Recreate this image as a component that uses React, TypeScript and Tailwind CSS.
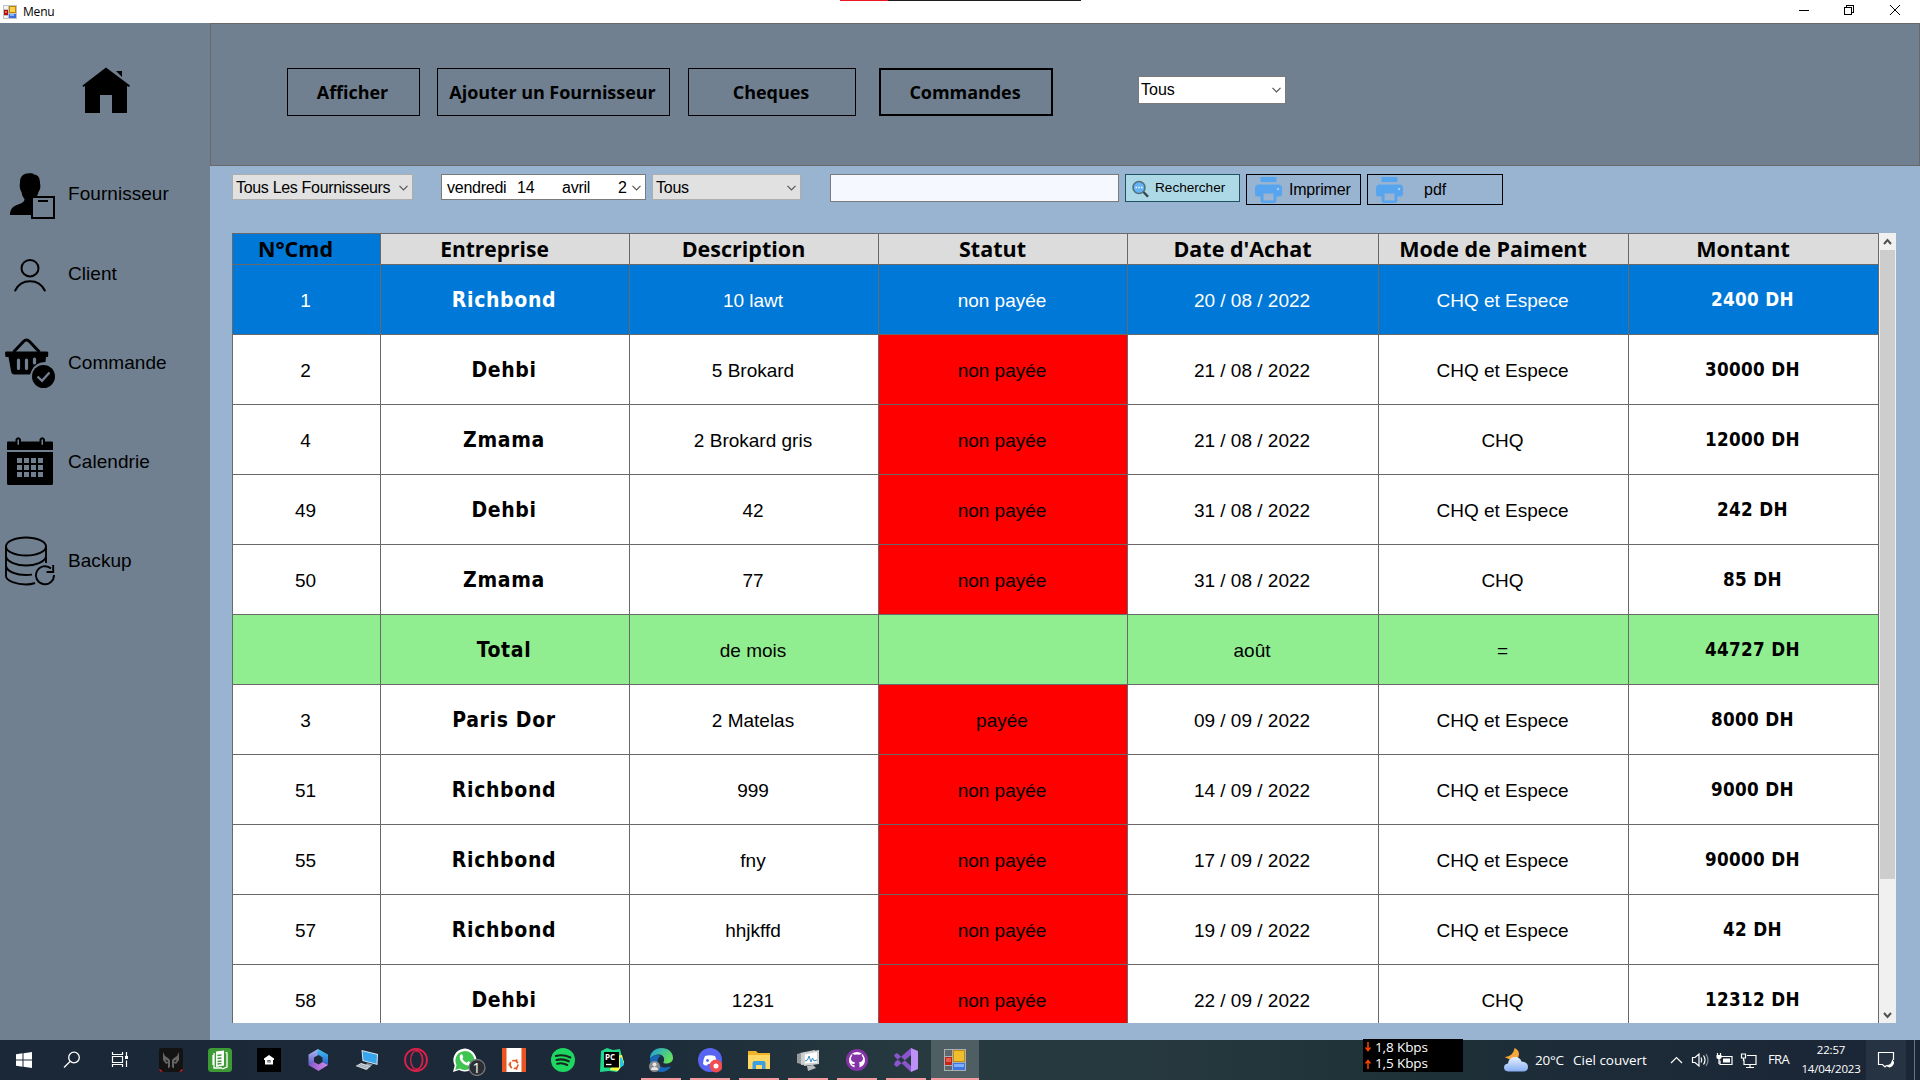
import React from "react";

const arial = "font-['Liberation_Sans',Arial,sans-serif]";
const segoe = "font-['Open_Sans','Segoe_UI',sans-serif]";
const tahoma = "font-['DejaVu_Sans_Condensed','DejaVu_Sans',Tahoma,sans-serif] [font-stretch:condensed]";

function FormIcon({ size }: { size: number }) {
  return (
    <svg width={size} height={size} viewBox="0 0 14 14" shapeRendering="crispEdges">
      <rect width="14" height="14" fill="#c3c3c3" />
      <path d="M1 1h4v3H1zM1 11h4v2H1z" fill="#f4f4f4" />
      <rect x="6" y="1" width="7" height="7" fill="#b8860b" />
      <rect x="7" y="2" width="5" height="5" fill="#fbd04a" />
      <rect x="1" y="5" width="4" height="5" fill="#a81410" />
      <rect x="2" y="6" width="2" height="2" fill="#f0685a" />
      <rect x="6" y="9" width="7" height="4" fill="#3a6fe0" />
      <rect x="7" y="9" width="4" height="2" fill="#8ab4ff" />
    </svg>
  );
}

function RunningFormIcon() {
  return (
    <svg width="22" height="22" viewBox="0 0 22 22" shapeRendering="crispEdges">
      <rect width="22" height="22" fill="#a9b0b3" />
      <path d="M1 1h7v6H1zM1 17h7v4H1z" fill="#5c686c" />
      <rect x="9" y="1" width="12" height="12" fill="#c08a10" />
      <rect x="10" y="2" width="10" height="10" fill="#f2bd2c" />
      <rect x="1" y="8" width="7" height="8" fill="#c0251c" />
      <rect x="2" y="9" width="5" height="4" fill="#ea5a4c" />
      <rect x="9" y="14" width="12" height="7" fill="#3f74e4" />
      <rect x="10" y="15" width="10" height="3" fill="#7faeff" />
    </svg>
  );
}

function TitleBar() {
  return (
    <header className="relative flex h-[23px] items-start bg-white">
      <div className="absolute left-[840px] top-0 flex h-px w-[241px] bg-[#1d1d1d]">
        <div className="h-px w-12 bg-[#f01428]" />
      </div>
      <div className="flex h-[23px] flex-1 items-center pl-[3px]">
        <FormIcon size={14} />
        <span className={`pl-[6px] text-[12px] tracking-[-0.2px] text-black ${segoe}`}>Menu</span>
      </div>
      <svg width="122" height="23" fill="none" stroke="#000" shapeRendering="crispEdges">
        <path d="M1 10.500h10" />
        <path d="M46.500 7.500h7v7h-7zM48.500 7V5.500h7v7H54" />
        <path d="M92 5l10 10M102 5l-10 10" shapeRendering="auto" />
      </svg>
    </header>
  );
}

const HomeIcon = () => (
  <svg width="48" height="46" viewBox="0 0 48 46">
    <path d="M24 0.500L0.500 18.500L1 20L3 19V46H18V28H30V46H45V19L47 20L48 18.500Z" />
    <path d="M34 4h6v6z" />
  </svg>
);
const SupplierIcon = () => (
  <svg width="45" height="46" viewBox="0 0 45 46">
    <path d="M10 9C10 3 14 0 20 0.300C24 0 23 1 24 1.500C29 2 30 6 30 10C31 14 30 17 28.500 19C28 22 26.500 23 26.500 24H21.500V42H0C0 36 3 33 8 31.500C12 30 14.500 29 14.500 26C12 23 12 21 11.500 19C9.500 16 9.500 13 10 9Z" />
    <path d="M22 24h22v21h-22z" fill="#708090" stroke="#000" strokeWidth="2" />
    <path d="M28 28h10" stroke="#000" strokeWidth="2" />
  </svg>
);
const ClientIcon = () => (
  <svg width="32" height="33" viewBox="0 0 32 33" fill="none" stroke="#000" strokeWidth="2" strokeLinecap="round">
    <ellipse cx="16" cy="9.200" rx="8.500" ry="8.200" />
    <path d="M1.200 31.500C7 19 25 19 30.800 31.500" />
  </svg>
);
const BasketIcon = () => (
  <svg width="50" height="50" viewBox="0 0 50 50">
    <path d="M8.500 14L18.500 3.500Q21.500 0.500 24.500 3.500L34.500 14" fill="none" stroke="#000" strokeWidth="3" />
    <path d="M1 13.500H42Q43.500 13.500 43.300 15L43 19H41L40.500 24Q31 24 27 32L25 36.500H9.500Q6.500 36.500 6 33L3.500 19H0.500L0 15Q0 13.500 1 13.500Z" />
    <path d="M13.500 22v8.500M21.500 22v8.500M29.500 21v4" stroke="#708090" strokeWidth="3.200" strokeLinecap="round" />
    <circle cx="38.500" cy="38.500" r="13" fill="#708090" />
    <circle cx="38.500" cy="38.500" r="11.500" />
    <path d="M32.500 38.500l4.500 4.300l7.500-8.300" fill="none" stroke="#708090" strokeWidth="2.400" />
  </svg>
);
const CalendarIcon = () => (
  <svg width="46" height="48" viewBox="0 0 46 48">
    <path d="M1 4.500H45Q46 4.500 46 5.500V13H0V5.500Q0 4.500 1 4.500ZM0 15H46V46.500Q46 48 44.500 48H1.500Q0 48 0 46.500Z" />
    <path d="M9.500 8V2.500Q11.200 0 13 2.500V8M33.500 8V2.500Q35.200 0 37 2.500V8" fill="#708090" stroke="#000" strokeWidth="2" />
    <path d="M9.500 8.500h3.500M33.500 8.500h3.500" stroke="#000" strokeWidth="1.500" />
    {[21, 28, 35].map((y) =>
      [10, 17, 24, 31].map((x) => <rect key={`${x}-${y}`} x={x} y={y} width="5" height="5" fill="#708090" />),
    )}
  </svg>
);
const BackupIcon = () => (
  <svg width="50" height="50" viewBox="0 0 50 50" fill="none" stroke="#000" strokeWidth="1.900">
    <ellipse cx="21" cy="10.500" rx="20" ry="9" />
    <path d="M1 10.500V40C1 45 12 48.500 21 48.500Q26 48.500 30 47M41 10.500V27M1 20.500C2 26 12 29.500 21 29.500S40 26 41 20.500M1 30C2 36 12 39 21 39Q24 39 27 38.600" />
    <path d="M46 32.500A9 9 0 1 0 49 39M48.200 29V36H41.500" />
  </svg>
);

function SideItem({ children, label, height, iconPad, labelTop }: {
  children: React.ReactNode; label: string; height: string; iconPad: string; labelTop: string;
}) {
  return (
    <div className={`flex items-start ${height}`}>
      <div className={`w-[68px] ${iconPad}`}>{children}</div>
      <span className={`text-[19px] leading-6 tracking-[0.05px] text-black ${labelTop} ${arial}`}>{label}</span>
    </div>
  );
}

function Sidebar() {
  return (
    <nav className="flex w-[210px] shrink-0 flex-col bg-[#708090]">
      <div className="h-[150px] pl-[82px] pt-[44px]"><HomeIcon /></div>
      <SideItem label="Fournisseur" height="h-[86px]" iconPad="pl-[10px]" labelTop="pt-[9px]"><SupplierIcon /></SideItem>
      <SideItem label="Client" height="h-[79px]" iconPad="pl-[14px]" labelTop="pt-[3px]"><ClientIcon /></SideItem>
      <SideItem label="Commande" height="h-[99px]" iconPad="pl-[5px]" labelTop="pt-[13px]"><BasketIcon /></SideItem>
      <SideItem label="Calendrie" height="h-[99px]" iconPad="pl-[7px]" labelTop="pt-[13px]"><CalendarIcon /></SideItem>
      <SideItem label="Backup" height="h-[99px]" iconPad="pl-[5px]" labelTop="pt-[13px]"><BackupIcon /></SideItem>
    </nav>
  );
}

const Chevron = () => (
  <svg width="9" height="6" viewBox="0 0 9 6" className="shrink-0" fill="none" stroke="#555" strokeWidth="1.200">
    <path d="M0.500 0.800l4 4l4-4" />
  </svg>
);

function TopPanel() {
  const btn = `flex h-12 items-center justify-center border-black pr-[2px] text-[18px] font-bold tracking-[-0.05px] text-black ${segoe}`;
  return (
    <div className="flex h-[143px] items-start border border-[#696969] bg-[#708090] pl-[76px] pt-[44px]">
      <button className={`${btn} w-[133px] border`}>Afficher</button>
      <button className={`${btn} ml-[17px] w-[233px] border`}>Ajouter un Fournisseur</button>
      <button className={`${btn} ml-[18px] w-[168px] border`}>Cheques</button>
      <button className={`${btn} ml-[23px] w-[174px] border-2`}>Commandes</button>
      <div className="ml-[85px] mt-2 flex h-7 w-[148px] items-center justify-between border border-[#7a7a7a] bg-white pl-[2px] pr-[4px]">
        <span className={`pb-px text-[16px] leading-5 text-black ${arial}`}>Tous</span>
        <Chevron />
      </div>
    </div>
  );
}

const PrinterIcon = () => (
  <svg width="27" height="26" viewBox="0 0 27 26" fill="#56a5ee">
    <rect x="5.500" y="0" width="16" height="5" rx="0.500" />
    <path d="M3 7.500H24Q27 8 27 11V17Q27 19.500 24 19.500H21.500V23Q21.500 26 18.500 26H8.500Q5.500 26 5.500 23V19.500H3Q0 19.500 0 17V11Q0 8 3 7.500Z" />
    <rect x="8.500" y="16.500" width="10" height="7" fill="#9ab4d2" />
    <circle cx="23" cy="12" r="1.200" fill="#a9cdf2" />
  </svg>
);

function Filters() {
  const combo = `flex h-[26px] items-center justify-between pt-px text-[16px] tracking-[-0.25px] text-black ${arial}`;
  return (
    <div className="flex h-[67px] items-start pl-[22px] pt-2">
      <div className={`${combo} w-[181px] border border-[#adadad] bg-[#e1e1e1] pl-[3px] pr-[4px]`}>
        <span className="whitespace-nowrap tracking-[-0.32px]">Tous Les Fournisseurs</span>
        <Chevron />
      </div>
      <div className={`${combo} ml-7 w-[205px] border border-[#7a7a7a] bg-white pl-[5px] pr-[4px]`}>
        <span className="w-[70px]">vendredi</span>
        <span className="w-[45px]">14</span>
        <span className="w-[56px]">avril</span>
        <span className="flex-1 overflow-hidden">2</span>
        <Chevron />
      </div>
      <div className={`${combo} ml-[6px] w-[149px] border border-[#adadad] bg-[#e1e1e1] pl-[3px] pr-[4px]`}>
        <span>Tous</span>
        <Chevron />
      </div>
      <div className="ml-[29px] h-7 w-[289px] border border-[#7a7a7a] bg-[#f5f8ff]" />
      <button className={`ml-[6px] flex h-7 w-[115px] items-center border border-[#1c5160] bg-[#add8e6] pl-[6px] pt-px text-[13.600px] text-black ${arial}`}>
        <svg width="17" height="18" viewBox="0 0 17 18">
          <circle cx="7" cy="7.500" r="6" fill="#64b5f6" stroke="#55707c" strokeWidth="1.600" />
          <path d="M11.500 12l4.500 4.800" stroke="#37474f" strokeWidth="2.400" />
          <path d="M3.500 7.500h1.500M6.300 7.500h1.500M9 7.500h1.500" stroke="#fff" strokeWidth="1.500" />
        </svg>
        <span className="pl-[6px]">Rechercher</span>
      </button>
      <button className={`ml-[6px] flex h-[31px] w-[115px] items-center border border-black pl-2 text-[16px] tracking-[-0.2px] text-black ${arial}`}>
        <PrinterIcon />
        <span className="pl-[7px]">Imprimer</span>
      </button>
      <button className={`ml-[6px] flex h-[31px] w-[136px] items-center border border-black pl-2 text-[16px] text-black ${arial}`}>
        <PrinterIcon />
        <span className="pl-[21px]">pdf</span>
      </button>
    </div>
  );
}

const cols = "grid grid-cols-[148px_249px_249px_249px_251px_250px_250px]";
const heads = ["N°Cmd", "Entreprise", "Description", "Statut", "Date d'Achat", "Mode de Paiment", "Montant"];
const rows = [
  ["1", "Richbond", "10 lawt", "non payée", "20 / 08 / 2022", "CHQ et Espece", "2400 DH"],
  ["2", "Dehbi", "5 Brokard", "non payée", "21 / 08 / 2022", "CHQ et Espece", "30000 DH"],
  ["4", "Zmama", "2 Brokard gris", "non payée", "21 / 08 / 2022", "CHQ", "12000 DH"],
  ["49", "Dehbi", "42", "non payée", "31 / 08 / 2022", "CHQ et Espece", "242 DH"],
  ["50", "Zmama", "77", "non payée", "31 / 08 / 2022", "CHQ", "85 DH"],
  ["", "Total", "de mois", "", "août", "=", "44727 DH"],
  ["3", "Paris Dor", "2 Matelas", "payée", "09 / 09 / 2022", "CHQ et Espece", "8000 DH"],
  ["51", "Richbond", "999", "non payée", "14 / 09 / 2022", "CHQ et Espece", "9000 DH"],
  ["55", "Richbond", "fny", "non payée", "17 / 09 / 2022", "CHQ et Espece", "90000 DH"],
  ["57", "Richbond", "hhjkffd", "non payée", "19 / 09 / 2022", "CHQ et Espece", "42 DH"],
  ["58", "Dehbi", "1231", "non payée", "22 / 09 / 2022", "CHQ", "12312 DH"],
];

function Row({ cells, index }: { cells: string[]; index: number }) {
  const selected = index === 0;
  const total = cells[1] === "Total";
  const tone = selected ? "bg-[#0078d7] text-white" : total ? "bg-[#90ee90] text-black" : "bg-white text-black";
  return (
    <div className={`${cols} h-[70px] ${tone}`}>
      {cells.map((c, i) => {
        const font =
          i === 1
            ? `pt-[2px] text-[21px] font-bold tracking-[0.65px] ${tahoma}`
            : i === 6
              ? `pt-[2px] text-[18.700px] font-bold tracking-[0.3px] ${tahoma}`
              : i === 2
                ? `pt-[3px] text-[19px] ${arial}`
                : `pt-[3px] text-[19px] ${arial}`;
        const red = i === 3 && !selected && !total ? "bg-[#ff0000]" : "";
        return (
          <div key={i} className={`flex items-center justify-center whitespace-nowrap border-b border-r border-[#696969] pr-[2px] ${font} ${red}`}>
            {c}
          </div>
        );
      })}
    </div>
  );
}

function OrdersTable() {
  return (
    <div className="ml-[22px] flex h-[790px] w-[1664px] overflow-hidden">
      <div className="w-[1647px] border-l border-t border-[#696969]">
        <div className={`${cols} h-[31px] grid-rows-[31px]`}>
          {heads.map((h, i) => (
            <div
              key={h}
              className={`flex items-center justify-center whitespace-nowrap border-b border-r border-[#696969] font-bold leading-[30px] text-black ${segoe} ${i === 1 ? "text-[21px]" : "text-[21.500px]"} ${i === 0 ? "bg-[#0078d7] pr-[22px]" : "bg-[#dcdcdc] pr-[21px]"}`}
            >
              {h}
            </div>
          ))}
        </div>
        {rows.map((r, i) => <Row key={i} cells={r} index={i} />)}
      </div>
      <div className="flex w-[17px] flex-col items-center bg-[#f0f0f0]">
        <svg width="17" height="17" viewBox="0 0 17 17" fill="none" stroke="#505050" strokeWidth="2"><path d="M5 11l3.500-4l3.500 4" /></svg>
        <div className="h-[629px] w-[15px] bg-[#cdcdcd]" />
        <svg width="17" height="17" viewBox="0 0 17 17" className="mt-auto" fill="none" stroke="#505050" strokeWidth="2"><path d="M5 7l3.500 4l3.500-4" /></svg>
      </div>
    </div>
  );
}

const S = ({ children }: { children: React.ReactNode }) => (
  <svg width="24" height="24" viewBox="0 0 24 24">{children}</svg>
);

const apps: { icon: React.ReactNode; open?: boolean; active?: boolean }[] = [
  { icon: <S><rect width="24" height="24" rx="2" fill="#131313" /><path d="M0 20.500l4 3H1zM24 20.500l-4 3H23z" fill="#e0202a" /><path d="M4 4l2 4l3 2l2 2v7l-2 1.500V15l-2 1l-3-4zM20 4l-2 4l-3 2l-2 2v7l2 1.500V15l2 1l3-4z" fill="#666" /><path d="M6.500 11.500l2.500 1.500v1l-2-.5zM17.500 11.500L15 13v1l2-.5z" fill="#161616" /></S> },
  { icon: <S><rect width="24" height="24" rx="3.500" fill="#3d9a35" /><path d="M8 3.500l8-1v15l-8 1.500z" fill="#fff" /><path d="M6 5v15l8 0M17.500 4.500l1.500 .5v14l-5 2M5 7v10" fill="none" stroke="#fff" strokeWidth="1.300" /><path d="M9.500 7.500l4-.5M9.500 10.500l4-.5M9.500 13.500l4-.5M9.500 16l4-.5" stroke="#3d9a35" strokeWidth="1.500" /></S> },
  { icon: <S><rect width="24" height="24" fill="#000" /><path d="M12 7l-5 3.500v1.500h1v4.500h8V12h1v-1.500z" fill="#fff" /><path d="M10.500 14.500v-2.500h3v2.500z" fill="#333" /><path d="M12 12.500v2" stroke="#fff" /></S> },
  { icon: <S><defs><linearGradient id="m1" x2="0" y2="1"><stop stopColor="#b3b9f2" /><stop offset="1" stopColor="#4c4bbd" /></linearGradient><linearGradient id="m2" x2="0" y2="1"><stop stopColor="#3fc4f4" /><stop offset="1" stopColor="#2f5fc8" /></linearGradient><linearGradient id="m3" x2="1"><stop stopColor="#8a55c8" /><stop offset="1" stopColor="#d18de8" /></linearGradient></defs><path d="M12 1L2.500 6.500V17l5.500 3V9.500l4.500-2.500z" fill="url(#m1)" /><path d="M12 1l10 5.500V17l-5.500-3V9.500L11 6z" fill="url(#m2)" /><path d="M2.500 17L8 14l4.500 2.500l4-2.500l5.500 3L12.500 23z" fill="url(#m3)" /></S> },
  { icon: <S><path d="M6.500 2l16.500 4l-.5 11l-15-4z" fill="#dbe6ef" /><path d="M7.500 3.200l14.500 3.500l-.5 9l-13-3.400z" fill="#37a6ee" /><path d="M12 15l6 1.500l-2 1.500l-5-1z" fill="#8b98a3" /><path d="M6 15l10 3l-4.500 4L0.500 18z" fill="#d6dce1" /><path d="M3 17.500l9 2.700M5 16.500l9 2.500" stroke="#8793a0" strokeWidth=".8" /></S> },
  { icon: <S><circle cx="12" cy="12" r="11" fill="none" stroke="#e0204a" strokeWidth="1.800" /><ellipse cx="12.500" cy="12" rx="5.800" ry="9.300" fill="none" stroke="#e0204a" strokeWidth="1.300" /><path d="M12 2.800q7 1 7 9.200t-7 9.200" fill="none" stroke="#e0204a" strokeWidth="1" /></S> },
  { icon: <svg width="34" height="28" viewBox="0 0 34 28" className="ml-[8px] mt-[3px]"><path d="M1 24L2.700 17.500A11.500 11.500 0 1 1 7 22z" fill="#fff" /><path d="M3.200 22l1.300-5A9.500 9.500 0 1 1 7.700 20.500z" fill="#3fc351" /><path d="M8.500 6.500q1.500-1 2.200 1l.6 1.800l-1 1.400q1.500 3 4.500 4l1.400-1.500l2.600 1.200q.8 1.500-2 3q-5 0-8.200-5q-1.800-3.500-.1-5.900z" fill="#fff" /><circle cx="25" cy="19.500" r="8" fill="#2b2f33" stroke="#75797d" strokeWidth="1.300" /><text x="24.500" y="24.500" textAnchor="middle" fontSize="14" fill="#fff" fontFamily="Open Sans">1</text></svg> },
  { icon: <S><rect width="24" height="24" fill="#fff" /><path d="M0 0h4.500v24H0zM19.500 0H24v24h-4.500z" fill="#e95420" /><circle cx="12" cy="16.500" r="4" fill="none" stroke="#e95420" strokeWidth="1.700" strokeDasharray="6.500 1.800" /><path d="M6.500 16.500h2M14 11.500l.8 1.500M14 21.500l.8-1.500" stroke="#e95420" strokeWidth="2.200" /></S> },
  { icon: <S><circle cx="12" cy="12" r="12" fill="#1ed760" /><path d="M4.800 8q7.500-2 14.500 1.500M5.500 12q6.500-1.700 12.300 1.300M6.200 15.700q5.300-1.200 10 1.300" fill="none" stroke="#14271c" strokeWidth="2.100" strokeLinecap="round" /></S> },
  { icon: <S><path d="M1 3l6-3l6 2l7-1l2 8l2 5l-7 10l-8-1l-9 1z" fill="#21d789" /><path d="M15 8l7-1l2 8l-6 8l-8-1z" fill="#fcf84a" /><path d="M20 9l2 1l2 7l-4 3z" fill="#25c7ea" /><rect x="4" y="4" width="15" height="15.500" fill="#000" /><text x="5" y="12" fontSize="8" fontWeight="bold" fill="#fff" fontFamily="Open Sans">PC</text><path d="M6 16.500h5.500" stroke="#fff" strokeWidth="1.300" /></S> },
  { open: true, icon: <S><defs><linearGradient id="e1" x2="1" y2=".5"><stop stopColor="#1b9de2" /><stop offset="1" stopColor="#63de5d" /></linearGradient></defs><path d="M1 11C1 4 6 0 12.500 0C19 0 24 4 24 10C24 14 20.500 15.500 17 15.500C14 15.500 14 14 15 13C16 9 13 6.500 10 6.500C5 6.500 2 9 1 11Z" fill="url(#e1)" /><path d="M1 11C3 7 9 6 12 8C9 9 8 12 9 15C11 20 17 20.500 22 18C20 22 16 24 12 24C5 24 .5 18 1 11Z" fill="#1766b8" /><circle cx="5.500" cy="18.500" r="5.500" fill="#8c8c8c" /><circle cx="5.500" cy="16.500" r="2" fill="#e8e8e8" /><path d="M2 22q0-3 3.500-3t3.500 3z" fill="#e8e8e8" /></S> },
  { open: true, icon: <svg width="24" height="26" viewBox="0 0 24 26"><circle cx="12" cy="13" r="12" fill="#5865f2" /><path d="M7 9q5-1.500 10 0q2 4 2 8q-2 2-4 1.500l-1-1.500h-4l-1 1.500q-2 .5-4-1.500q0-4 2-8z" fill="#fff" /><circle cx="9.500" cy="13.500" r="1.400" fill="#5865f2" /><circle cx="18" cy="19" r="6.500" fill="#f04d50" /><circle cx="18" cy="19" r="2.500" fill="#fff" /></svg> },
  { open: true, icon: <S><path d="M1 3h8l2 2h12v16H1z" fill="#f0b429" /><path d="M1 7h22v14H1z" fill="#ffd765" /><path d="M5.500 21v-6q0-2 2-2h9q2 0 2 2v6h-3.500v-4H9v4z" fill="#3c9fe0" /></S> },
  { open: true, icon: <S><path d="M4 5l15-3v14l-14 1z" fill="#c9cdcf" /><path d="M1 6l4-1v11l-4-1z" fill="#969b9d" /><path d="M7 5l16-3v14l-15 2z" fill="#cfd3d4" /><path d="M9 6.500l12-2.500v10.500l-12 1z" fill="#fff" /><path d="M9 13l2.500-1l1.500-4l2 6l1.500-4l1.500 3l3-1" fill="none" stroke="#388cc9" /><path d="M11 18l6-1l3 3l-8 3z" fill="#b9bcbd" /></S> },
  { open: true, icon: <S><circle cx="12" cy="12" r="11" fill="#8534a8" /><path d="M12 4a8 8 0 0 0-2.500 15.600V17q-2.500.3-3-1.500q1.500.8 3 .2q.2-1 .6-1.300c-4.500-.7-5-4.700-3-6.500l.1-2q1.500 0 2.500.9q2.300-.6 4.600 0q1-.9 2.500-.9l.1 2c2 1.800 1.500 5.800-3 6.500q.6.600.6 2v3.200A8 8 0 0 0 12 4z" fill="#fff" /></S> },
  { open: true, icon: <S><path d="M0 7l3-2l14 13v6L1 9zM0 17l3 2L17 7V0L1 14z" fill="#8a55cf" /><path d="M17 0l7 3v18l-7 3z" fill="#bd90f5" /></S> },
  { open: true, active: true, icon: <RunningFormIcon /> },
];

function Taskbar() {
  const tiny = `text-white ${segoe}`;
  return (
    <footer className="flex h-10 bg-[linear-gradient(90deg,#1b2838_0%,#1b2938_32%,#273a40_48%,#26383d_62%,#1e3237_72%,#1d2b38_82%,#1a2535_100%)]">
      <div className="flex w-[147px] items-center">
        <svg width="147" height="40" fill="none" stroke="#fff">
          <path d="M16 14.300l6.500-1v6.200H16zM23.500 13.200l8.500-1.200v7.500h-8.500zM16 20.500h6.500v6.200l-6.500-1zM23.500 20.500H32V28l-8.500-1.200z" fill="#fff" stroke="none" />
          <circle cx="74" cy="17.500" r="5.300" strokeWidth="1.300" />
          <path d="M70 21.500l-6 6" strokeWidth="1.300" />
          <path d="M112.500 12v2.500h10V12M112.500 27v-2.500h10V27M112.500 16.500h10v6h-10zM126.500 12v5M126.500 20.500V27" strokeWidth="1.200" />
          <path d="M125 16h3v3h-3z" fill="#fff" stroke="none" />
        </svg>
      </div>
      <div className="flex gap-px">
        {apps.map((a, i) => (
          <div key={i} className={`flex w-12 flex-col items-center ${a.active ? "bg-[#4f5e63]" : ""}`}>
            <div className="flex h-[38px] items-center pt-[2px]">{a.icon}</div>
            {a.open && <div className={`h-[2px] bg-[#f59ba0] ${a.active ? "w-12" : "w-10"}`} />}
          </div>
        ))}
      </div>
      <div className={`-mt-px ml-[384px] flex h-[33px] w-[100px] flex-col bg-black text-[13.500px] leading-[17px] tracking-[-0.1px] ${tiny}`}>
        {[["↓", "1,8 Kbps"], ["↑", "1,5 Kbps"]].map(([arrow, rate]) => (
          <div key={rate} className="flex h-[16.500px] items-center pl-[2px]">
            <svg width="6" height="10" viewBox="0 0 6 10" className={arrow === "↑" ? "rotate-180" : ""} fill="none" stroke="#ff4500" strokeWidth="1.500">
              <path d="M3 0v8M0.500 5.500L3 8.500l2.500-3" />
            </svg>
            <span className="pl-[4px]">{rate}</span>
          </div>
        ))}
      </div>
      <svg width="26" height="26" viewBox="0 0 26 26" className="ml-10 mt-[7px]">
        <defs><linearGradient id="cl" x2="0" y2="1"><stop stopColor="#e6efff" /><stop offset="1" stopColor="#86aef2" /></linearGradient></defs>
        <path d="M11.500 1C17 3 17 9 14 12L10 14L1.500 10C7 10 11 6 11.500 1Z" fill="#f5a83a" />
        <path d="M5 24.500Q1 24 1 20.500Q1 17 5 16.500Q6 10 12 10Q17 10 18.500 14.500Q25 15 25 20Q25 24 20.500 24.500Z" fill="url(#cl)" />
      </svg>
      <div className={`flex h-10 items-center text-[13.500px] ${tiny}`}>
        <span className="w-[38px] pl-[6px] tracking-[-0.2px]">20°C</span>
        <span className="w-[103px] whitespace-nowrap pl-[6px]">Ciel couvert</span>
      </div>
      <svg width="96" height="40" fill="none" stroke="#fff" strokeWidth="1.200">
        <path d="M1 23l5.500-5.500l5.500 5.500" />
        <path d="M22.500 17.500h2.500l4-3.500v12l-4-3.500h-2.500zM31 17.500q1.500 2.500 0 5M33.500 15.500q3 4.500 0 9" />
        <path d="M36 14q4 6 0 12" stroke="#8a939c" />
        <path d="M51 16.500h11v8H50v-4" />
        <path d="M53 18.500h7v4h-7zM46.500 15h5v3q-2.500 2.500-5 0z" fill="#fff" stroke="none" />
        <path d="M47.500 13v2M50.500 13v2M49 19v5" />
        <path d="M77 15.500h9v9H74v-5M80 24.500v3M76 27.500h8M71.500 14h4v4h-4zM73.500 18v3" />
      </svg>
      <span className={`flex h-10 w-[35px] items-center pl-[2px] text-[13px] tracking-[-0.6px] ${tiny}`}>FRA</span>
      <div className={`flex h-10 w-[60px] flex-col items-center pt-[1px] text-[11.500px] leading-[18.500px] tracking-[-0.2px] ${tiny}`}>
        <span>22:57</span>
        <span>14/04/2023</span>
      </div>
      <div className="ml-[5px] flex h-10 w-10 items-center justify-center bg-[#263342]">
        <svg width="18" height="18" viewBox="0 0 18 18" fill="none" stroke="#fff" strokeWidth="1.200">
          <path d="M16.500 9V1.500h-15v12h4l2.500 2.500l1.500-1.500" />
          <path d="M15.500 9.500q-1 5-5.500 5q2.500 2.500 5 0t.5-5z" fill="#fff" />
        </svg>
      </div>
      <div className="ml-2 h-10 w-px bg-[#6c757e]" />
    </footer>
  );
}

export default function App() {
  return (
    <div className="flex h-[1080px] w-[1920px] flex-col overflow-hidden bg-[#99b4d1]">
      <TitleBar />
      <div className="flex h-[1017px]">
        <Sidebar />
        <main className="flex w-[1710px] flex-col bg-[#99b4d1]">
          <TopPanel />
          <Filters />
          <OrdersTable />
        </main>
      </div>
      <Taskbar />
    </div>
  );
}
